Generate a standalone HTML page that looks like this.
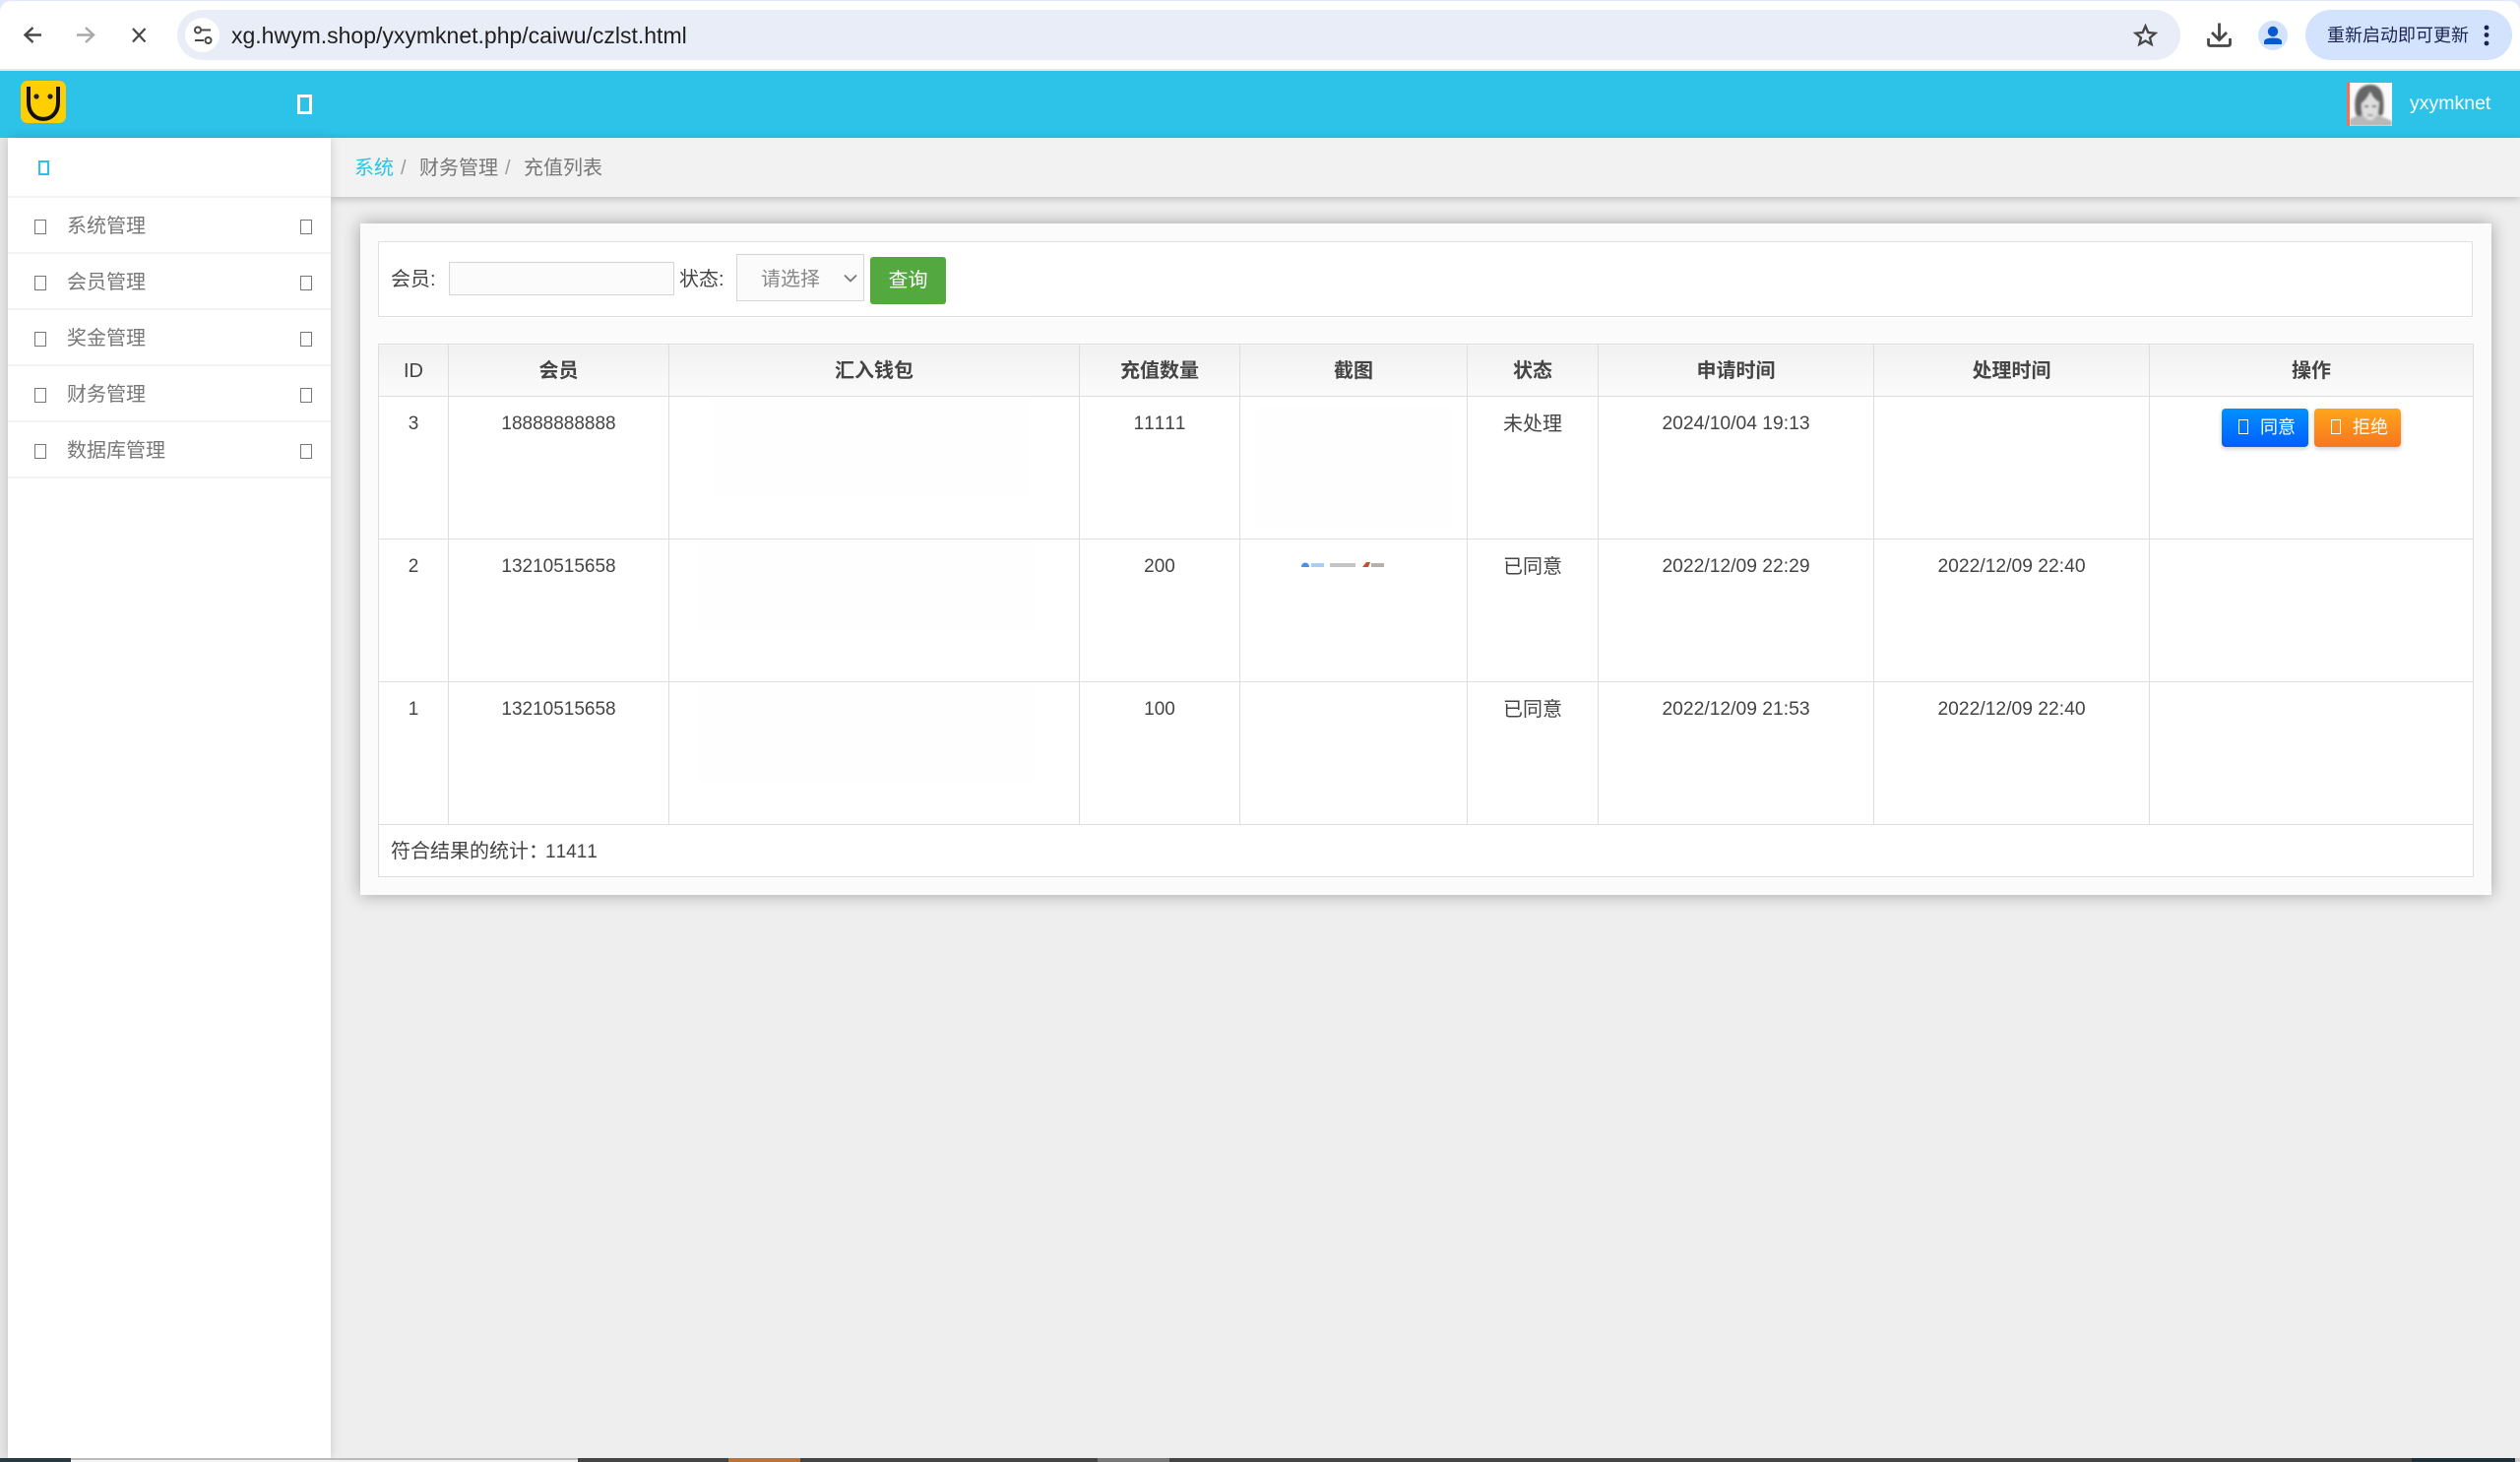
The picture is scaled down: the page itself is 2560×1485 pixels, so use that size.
<!DOCTYPE html>
<html lang="zh-CN">
<head>
<meta charset="utf-8">
<title>充值列表</title>
<style>
*{box-sizing:border-box}
html,body{margin:0;padding:0;width:2560px;height:1485px;overflow:hidden}
body{position:relative;background:#eee;font-family:"Liberation Sans","Noto Sans CJK SC",sans-serif;font-size:20px;color:#444}
.abs{position:absolute}
.tofu{position:absolute;border:2px solid #777;background:transparent}
#top{position:absolute;left:0;top:0;width:2560px;height:72px;background:#dfe9fb}
#bar{position:absolute;left:0;top:1px;width:2560px;height:69px;background:#fff;border-radius:11px 11px 0 0}
#line{position:absolute;left:0;top:70px;width:2560px;height:2px;background:#e6e6e6}
#addr{position:absolute;left:180px;top:10px;width:2035px;height:51px;background:#e9edf7;border-radius:26px}
#site{position:absolute;left:188px;top:18px;width:35px;height:35px;background:#fff;border-radius:50%}
#url{position:absolute;left:235px;top:18px;line-height:36px;font-size:23px;color:#1f1f1f;white-space:nowrap}
#upd{position:absolute;left:2342px;top:10px;width:210px;height:51px;background:#d3e3fd;border-radius:26px}
#updt{position:absolute;left:2364px;top:21px;line-height:30px;font-size:18px;color:#1c2350;white-space:nowrap}
#hd{position:absolute;left:0;top:72px;width:2560px;height:68px;background:#2dc3e8}
#user{position:absolute;left:2448px;top:88px;line-height:34px;font-size:19.5px;color:#fff}
#bc{position:absolute;left:336px;top:140px;width:2224px;height:60px;background:#f2f2f2;box-shadow:0 2px 8px rgba(0,0,0,.22)}
#bc span{position:absolute;top:15px;line-height:32px;font-size:20px;color:#777;white-space:nowrap}
#left{position:absolute;left:0;top:140px;width:8px;height:1341px;background:#e6e6e6}
#side{position:absolute;left:8px;top:140px;width:328px;height:1341px;background:#fff;box-shadow:0 0 10px rgba(0,0,0,.16)}
.it{position:absolute;left:0;width:328px;height:57px;border-bottom:2px solid #f3f3f3}
.it b{position:absolute;left:60px;top:14px;line-height:30px;font-weight:normal;font-size:20px;color:#777;white-space:nowrap}
.it i{position:absolute;width:12px;height:15px;border:1.5px solid #777;top:22px}
.it i.l{left:27px}.it i.r{left:297px}
#panel{position:absolute;left:366px;top:227px;width:2165px;height:682px;background:#fbfbfb;box-shadow:0 0 16px rgba(0,0,0,.32)}
#flt{position:absolute;left:384px;top:245px;width:2128px;height:77px;background:#fff;border:1px solid #e0e0e0}
.lb{position:absolute;line-height:30px;font-size:20px;color:#444;white-space:nowrap}
#ipt{position:absolute;left:456px;top:266px;width:229px;height:34px;background:#fbfbfb;border:1px solid #d5d5d5}
#sel{position:absolute;left:748px;top:258px;width:130px;height:48px;background:#fbfbfb;border:1px solid #d5d5d5}
#btn{position:absolute;left:884px;top:261px;width:77px;height:48px;background:#53a93f;border-radius:3px;color:#fff;text-align:center;line-height:48px;font-size:20px}
table{position:absolute;left:384px;top:349px;width:2128px;border-collapse:collapse;table-layout:fixed;background:#fff}
th,td{border:1px solid #dedede;text-align:center;padding:0;font-size:20px;color:#444}
th{height:53px;font-weight:bold;background:linear-gradient(#f1f1f1,#fbfbfb);line-height:28px;padding-top:2px}
td{height:145px;vertical-align:top;padding-top:14px;line-height:28px;font-weight:normal}
.n{font-size:19px;font-kerning:none}
.d{font-size:19.3px;font-kerning:none}
tr.tot td{height:53px;text-align:left;padding:13px 0 0 12px;line-height:28px}
.op{position:absolute;top:415px;width:88px;height:39px;border-radius:4px;box-shadow:0 2px 5px rgba(0,0,0,.2);color:#fff;font-size:18px;line-height:39px}
.op i{position:absolute;left:17px;top:11px;width:10px;height:15px;border:1.5px solid #fff}
.op b{position:absolute;left:39px;top:0;font-weight:normal;white-space:nowrap}
.seg{position:absolute;top:1481px;height:4px}
.fa{position:absolute;background:#fefefe}
</style>
</head>
<body>
<div id="top"></div><div id="bar"></div><div id="line"></div>
<div id="addr"></div><div id="site"></div>
<div id="url">xg.hwym.shop/yxymknet.php/caiwu/czlst.html</div>
<div id="upd"></div><div id="updt">重新启动即可更新</div>

<svg class="abs" style="left:0;top:0" width="2560" height="72" viewBox="0 0 2560 72" fill="none">
  <path d="M42 35.5H26M33.5 28L25.5 35.5L33.5 43" stroke="#474747" stroke-width="2.400"/>
  <path d="M78 35.5H94.5M87 28L95 35.5L87 43" stroke="#a9a9a9" stroke-width="2.400"/>
  <path d="M135 29L147.5 42.5M147.5 29L135 42.5" stroke="#474747" stroke-width="2.200"/>
  <path d="M205 30.5H214M198 41H207" stroke="#474747" stroke-width="2"/>
  <circle cx="201" cy="30.5" r="3" stroke="#474747" stroke-width="2"/>
  <circle cx="211.500" cy="41" r="3" stroke="#474747" stroke-width="2"/>
  <path d="M2179.5 26.500L2182.300 33L2189.500 33.700L2184 38.400L2185.700 45L2179.500 41.500L2173.300 45L2175 38.400L2169.500 33.700L2176.700 33Z" stroke="#474747" stroke-width="2.300" stroke-linejoin="miter"/>
  <path d="M2254.5 23.500V40M2247 33L2254.500 40.500L2262 33" stroke="#474747" stroke-width="2.800"/>
  <path d="M2243.5 39V44.500Q2243.500 46.500 2245.500 46.500H2263.500Q2265.500 46.500 2265.500 44.500V39" stroke="#474747" stroke-width="2.800"/>
  <ellipse cx="2309" cy="36" rx="15" ry="15" fill="#d3e3fd"/>
  <circle cx="2309" cy="32" r="5.200" fill="#0b57d0"/>
  <path d="M2300 45V42.500Q2300 38.500 2309 38.500Q2318 38.500 2318 42.500V45Z" fill="#0b57d0"/>
  <circle cx="2526" cy="28" r="2.400" fill="#1c2350"/>
  <circle cx="2526" cy="35.500" r="2.400" fill="#1c2350"/>
  <circle cx="2526" cy="44" r="2.400" fill="#1c2350"/>
</svg>

<div id="hd"></div>
<svg class="abs" style="left:21px;top:82px" width="46" height="43" viewBox="21 82 46 43" fill="none">
  <rect x="21" y="82" width="46" height="43" rx="7" fill="#ffcf00"/>
  <path d="M29 88V104C29 126.500 59 126.500 59 104V88" stroke="#111" stroke-width="4"/>
  <circle cx="37" cy="98" r="2.600" fill="#222"/>
  <circle cx="51" cy="98" r="2.600" fill="#222"/>
</svg>
<div class="tofu" style="left:302px;top:96px;width:15px;height:20px;border:3px solid #fff"></div>

<svg class="abs" style="left:2384px;top:84px" width="46" height="44" viewBox="0 0 46 44">
  <defs><filter id="bl"><feGaussianBlur stdDeviation="1"/></filter></defs>
  <rect width="46" height="44" fill="#fafafa"/>
  <g filter="url(#bl)">
    <path d="M3 44V37L14 32L30 32L46 39V44Z" fill="#b8b8b8"/>
    <path d="M9 31C6 12 13 2 24 2C35 2 39 11 37 31C36 35 31 34 31 28L33 20C28 17 25 13 24 9C22 14 19 18 15 21L16 31C15 35 10 35 9 31Z" fill="#666"/>
    <path d="M15 21C19 18 22 14 24 9C25 13 28 17 33 20L32 29C30 36 26 39 23 38C18 37 15 32 15 26Z" fill="#dedede"/>
    <path d="M18 24H22M26 24H30" stroke="#444" stroke-width="1.800"/>
    <path d="M21 33H27" stroke="#777" stroke-width="1.300"/>
  </g>
  <rect width="3" height="44" fill="#fb6e52"/>
</svg>
<div id="user">yxymknet</div>

<div id="bc">
  <span style="left:24px;color:#2dc3e8">系统</span>
  <span style="left:71px;color:#999">/</span>
  <span style="left:90px">财务管理</span>
  <span style="left:177px;color:#999">/</span>
  <span style="left:196px">充值列表</span>
</div>

<div id="left"></div>
<div id="side">
  <div class="it" style="top:0;height:61px"><i style="position:absolute;left:31px;top:23px;width:11px;height:15px;border:2px solid #2dc3e8"></i></div>
  <div class="it" style="top:61px"><i class="l"></i><b>系统管理</b><i class="r"></i></div>
  <div class="it" style="top:118px"><i class="l"></i><b>会员管理</b><i class="r"></i></div>
  <div class="it" style="top:175px"><i class="l"></i><b>奖金管理</b><i class="r"></i></div>
  <div class="it" style="top:232px"><i class="l"></i><b>财务管理</b><i class="r"></i></div>
  <div class="it" style="top:289px"><i class="l"></i><b>数据库管理</b><i class="r"></i></div>
</div>

<div id="panel"></div>
<div id="flt"></div>
<div class="lb" style="left:397px;top:269px">会员:</div>
<div id="ipt"></div>
<div class="lb" style="left:690px;top:269px">状态:</div>
<div id="sel"></div>
<div class="lb" style="left:773px;top:269px;color:#888">请选择</div>
<svg class="abs" style="left:857px;top:278px" width="14" height="9" viewBox="0 0 14 9" fill="none"><path d="M1 1.500L7 7.500L13 1.500" stroke="#777" stroke-width="1.800"/></svg>
<div id="btn">查询</div>

<table>
  <colgroup>
    <col style="width:71px"><col style="width:224px"><col style="width:417px"><col style="width:163px"><col style="width:231px"><col style="width:133px"><col style="width:280px"><col style="width:280px"><col style="width:329px">
  </colgroup>
  <tr><th style="font-weight:normal">ID</th><th>会员</th><th>汇入钱包</th><th>充值数量</th><th>截图</th><th>状态</th><th>申请时间</th><th>处理时间</th><th>操作</th></tr>
  <tr><td class="n">3</td><td class="n">18888888888</td><td></td><td class="n">11111</td><td></td><td>未处理</td><td class="d">2024/10/04 19:13</td><td></td><td></td></tr>
  <tr><td class="n">2</td><td class="n">13210515658</td><td></td><td class="n">200</td><td></td><td>已同意</td><td class="d">2022/12/09 22:29</td><td class="d">2022/12/09 22:40</td><td></td></tr>
  <tr><td class="n">1</td><td class="n">13210515658</td><td></td><td class="n">100</td><td></td><td>已同意</td><td class="d">2022/12/09 21:53</td><td class="d">2022/12/09 22:40</td><td></td></tr>
  <tr class="tot"><td colspan="9">符合结果的统计：<span class="n" style="margin-left:-3px">11411</span></td></tr>
</table>

<div class="fa" style="left:725px;top:405px;width:320px;height:100px"></div>
<div class="fa" style="left:1275px;top:412px;width:200px;height:125px"></div>
<div class="fa" style="left:710px;top:550px;width:340px;height:90px"></div>
<div class="fa" style="left:710px;top:696px;width:340px;height:100px"></div>

<svg class="abs" style="left:1320px;top:568px" width="90" height="10" viewBox="0 0 90 10">
  <path d="M2 8C2 2 10 2 10 8Z" fill="#4a90e8"/>
  <rect x="12" y="4" width="13" height="4" fill="#a9cdf5"/>
  <rect x="31" y="4" width="26" height="4" fill="#c4c4c4"/>
  <path d="M64 8L68 3L72 3L70 8Z" fill="#c9502f"/>
  <rect x="73" y="4" width="13" height="4" fill="#b9b0aa"/>
</svg>

<div class="op" style="left:2257px;background:linear-gradient(#0091ff,#005eff)"><i></i><b>同意</b></div>
<div class="op" style="left:2351px;background:linear-gradient(#ffa51c,#f7761e)"><i></i><b>拒绝</b></div>

<div class="seg" style="left:0;width:72px;background:#2a3a42"></div>
<div class="seg" style="left:72px;width:515px;background:#f4f4f4;border-top:2px solid #bbb"></div>
<div class="seg" style="left:587px;width:153px;background:#444"></div>
<div class="seg" style="left:740px;width:73px;background:#b9743c"></div>
<div class="seg" style="left:813px;width:302px;background:#444"></div>
<div class="seg" style="left:1115px;width:73px;background:#777"></div>
<div class="seg" style="left:1188px;width:1262px;background:#444"></div>
<div class="seg" style="left:2450px;width:105px;background:#1f2f38"></div>
<div class="seg" style="left:2555px;width:5px;background:#ccc"></div>
</body>
</html>
